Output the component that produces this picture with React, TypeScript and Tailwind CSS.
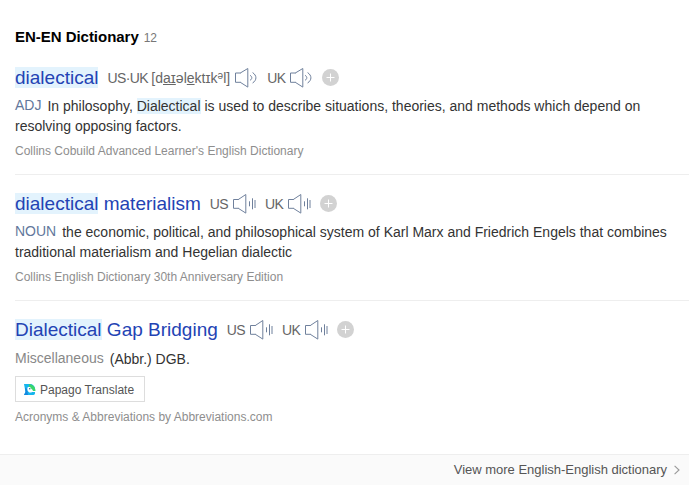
import type { ReactNode } from "react";

function Speaker({ wave }: { wave: "arc" | "bars" }) {
  return (
    <svg className="ml-[5px] h-[20px] w-[23px] shrink-0" viewBox="0 0 23 20" fill="none" stroke="#6f809c" strokeWidth="1">
      {wave === "arc" ? (
        <>
          <path d="M5.8 5H.5v9.3h5.3M5.3 5L12.8.5v18.6L5.3 14.3" />
          <path d="M15 7.2c2.4 1.6 2.4 3.6 0 5.2M17.6 4.6c4.4 2.8 4.4 7.6 0 10.4" />
        </>
      ) : (
        <>
          <path d="M5.8 5.5H.5v8.8h5.3M5.3 5.5L12.8.5v18.6L5.3 14.3" />
          <path d="M16.5 7.3v5M19.5 4.3v11M22 6v8" />
        </>
      )}
    </svg>
  );
}

function Plus() {
  return (
    <svg className="mb-px ml-[9px] h-[17px] w-[17px] shrink-0" viewBox="0 0 17 17">
      <circle cx="8.5" cy="8.5" r="8.5" fill="#d2d2d2" />
      <path d="M8.5 4.5v8M4.5 8.5h8" stroke="#fff" strokeWidth="1" />
    </svg>
  );
}

function Mark({ children }: { children: ReactNode }) {
  return <span className="bg-[#e3f3fd]">{children}</span>;
}

function Heading({ word, first, wave }: { word: ReactNode; first: ReactNode; wave: "arc" | "bars" }) {
  return (
    <div className="flex h-[24px] items-center whitespace-nowrap text-[14px] tracking-[-0.6px] text-[#666]">
      <span className="text-[19px] leading-[24px] tracking-normal text-[#2343b4]">{word}</span>
      <span className="ml-[9px] pb-px leading-[20px]">{first}</span>
      <Speaker wave={wave} />
      <span className="ml-[9px] pb-px leading-[20px]">UK</span>
      <Speaker wave={wave} />
      <Plus />
    </div>
  );
}

function Label({ children }: { children: ReactNode }) {
  return <span className="mr-[6px] inline-block -translate-y-px">{children}</span>;
}

function Source({ children }: { children: ReactNode }) {
  return <p className="text-[12px] leading-[16px] text-[#8e8e8e]">{children}</p>;
}

function PapagoIcon() {
  return (
    <svg className="h-[12px] w-[12px]" viewBox="0 0 12 12">
      <path d="M0 0h6a5 5 0 0 1 5 5v1H8v2h3v1.5A2 2 0 0 1 9 11H0l1.5-3z" fill="#16b5ee" />
      <path d="M1 3.5L3 5l1 6H0l1.5-3z" fill="#1688df" />
      <path d="M5 .3c3.6 0 6.2 2.2 6.5 6.7H7.8L5 3.4z" fill="#38d66b" />
      <path d="M3.5 3.5C5 2.6 7 3.2 7.3 4.8L9 6.2 7.5 8.5H5.3C3.6 7.5 3 5.5 3.5 3.5z" fill="#fff" />
      <circle cx="5.8" cy="4.8" r=".7" fill="#174d80" />
    </svg>
  );
}

export default function App() {
  return (
    <main className="flex h-[485px] w-[689px] flex-col overflow-hidden bg-white font-['Liberation_Sans',Arial,sans-serif] text-[14px] text-[#333]">
      <div className="flex-1 pl-[15px] pt-[27px]">
        <h2 className="flex h-[20px] items-center text-[15px] font-bold tracking-[-0.03px] text-black">
          EN-EN Dictionary
          <span className="ml-[5px] pt-px text-[12px] font-normal text-[#777]">12</span>
        </h2>
        <section className="mt-[19px] h-[109px] border-b border-[#eee]">
          <Heading
            wave="arc"
            word={<Mark>dialectical</Mark>}
            first={
              <>
                US·UK{" "}
                <span className="tracking-[0.02px]">
                  [d<u>aɪ</u>əl<u>e</u>ktɪk<span className="relative -top-[4px] text-[10px] leading-none">ə</span>l]
                </span>
              </>
            }
          />
          <p className="mt-[6px] leading-[20px]">
            <span className="text-[#62779c]"><Label>ADJ</Label></span>In philosophy, <Mark>Dialectical</Mark> is used to describe situations, theories, and methods which depend on
            <br />
            resolving opposing factors.
          </p>
          <div className="mt-[7px]">
            <Source>Collins Cobuild Advanced Learner's English Dictionary</Source>
          </div>
        </section>
        <section className="mt-[17px] h-[109px] border-b border-[#eee]">
          <Heading wave="bars" word={<><Mark>dialectical</Mark> materialism</>} first="US" />
          <p className="mt-[6px] leading-[20px]">
            <span className="text-[#62779c]"><Label>NOUN</Label></span>the economic, political, and philosophical system of Karl Marx and Friedrich Engels that combines
            <br />
            traditional materialism and Hegelian dialectic
          </p>
          <div className="mt-[7px]">
            <Source>Collins English Dictionary 30th Anniversary Edition</Source>
          </div>
        </section>
        <section className="mt-[17px]">
          <Heading wave="bars" word={<><Mark>Dialectical</Mark> Gap Bridging</>} first="US" />
          <p className="mt-[7px] leading-[20px]">
            <span className="text-[#888]"><Label>Miscellaneous</Label></span>(Abbr.) DGB.
          </p>
          <button className="mt-[7px] flex h-[26px] w-[130px] items-center gap-[4px] border border-[#ddd] pl-[8px] pt-px text-[12px] text-[#555]">
            <PapagoIcon />
            Papago Translate
          </button>
          <div className="mt-[7px]">
            <Source>Acronyms &amp; Abbreviations by Abbreviations.com</Source>
          </div>
        </section>
      </div>
      <footer className="flex h-[31px] items-center justify-end border-t border-[#eee] bg-[#fafafa] pr-[9px] text-[13px] tracking-[-0.01px] text-[#555]">
        View more English-English dictionary
        <svg className="ml-[7px] h-[10px] w-[6px]" viewBox="0 0 6 10" fill="none" stroke="#999" strokeWidth="1.1">
          <path d="M.6.8L5 5 .6 9.2" />
        </svg>
      </footer>
    </main>
  );
}
